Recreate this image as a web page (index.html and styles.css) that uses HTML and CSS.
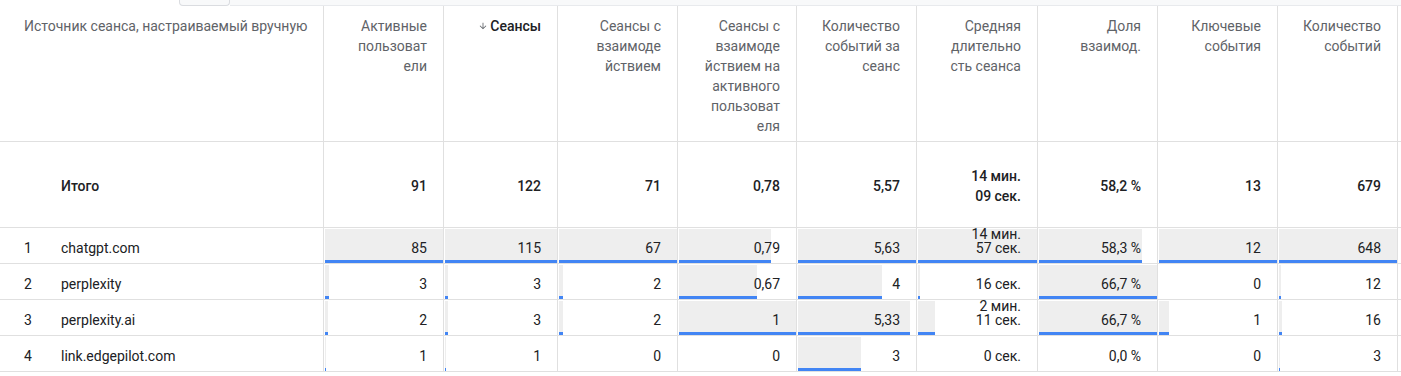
FILE: index.html
```html
<!DOCTYPE html>
<html lang="ru">
<head>
<meta charset="utf-8">
<title>Источник сеанса</title>
<link rel="stylesheet" href="styles.css">
</head>
<body>
<div class="topstrip"><div class="gap"></div><div class="tab"></div><div class="rail"></div></div>
<div class="table">
  <div class="row head">
    <div class="cell dim"><span class="label">Источник сеанса, настраиваемый вручную</span></div>
    <div class="cell"><span class="label">Активные пользоват<wbr>ели</span></div>
    <div class="cell sorted"><span class="label"><svg class="arrow" viewBox="0 0 24 24" width="10" height="10"><path d="M20 12l-1.41-1.41L13 16.17V4h-2v12.17l-5.58-5.59L4 12l8 8 8-8z"/></svg>Сеансы</span></div>
    <div class="cell"><span class="label">Сеансы с взаимоде<wbr>йствием</span></div>
    <div class="cell"><span class="label">Сеансы с взаимоде<wbr>йствием на активного пользоват<wbr>еля</span></div>
    <div class="cell"><span class="label">Количество событий за сеанс</span></div>
    <div class="cell"><span class="label">Средняя длительно<wbr>сть сеанса</span></div>
    <div class="cell"><span class="label">Доля взаимод.</span></div>
    <div class="cell"><span class="label">Ключевые события</span></div>
    <div class="cell"><span class="label">Количество событий</span></div>
  </div>

  <div class="row total">
    <div class="cell dim"><span class="idx"></span><span class="name">Итого</span></div>
    <div class="cell"><span class="val">91</span></div>
    <div class="cell"><span class="val">122</span></div>
    <div class="cell"><span class="val">71</span></div>
    <div class="cell"><span class="val">0,78</span></div>
    <div class="cell"><span class="val">5,57</span></div>
    <div class="cell"><span class="val">14 мин. 09 сек.</span></div>
    <div class="cell"><span class="val">58,2 %</span></div>
    <div class="cell"><span class="val">13</span></div>
    <div class="cell"><span class="val">679</span></div>
  </div>

  <div class="row data">
    <div class="cell dim"><span class="idx">1</span><span class="name">chatgpt.com</span></div>
    <div class="cell"><div class="track"><div class="bar" style="width:100%"></div></div><span class="val">85</span></div>
    <div class="cell"><div class="track"><div class="bar" style="width:100%"></div></div><span class="val">115</span></div>
    <div class="cell"><div class="track"><div class="bar" style="width:100%"></div></div><span class="val">67</span></div>
    <div class="cell"><div class="track"><div class="bar" style="width:79%"></div></div><span class="val">0,79</span></div>
    <div class="cell"><div class="track"><div class="bar" style="width:100%"></div></div><span class="val">5,63</span></div>
    <div class="cell"><div class="track"><div class="bar" style="width:100%"></div></div><span class="val">14 мин. 57 сек.</span></div>
    <div class="cell"><div class="track"><div class="bar" style="width:87.41%"></div></div><span class="val">58,3 %</span></div>
    <div class="cell"><div class="track"><div class="bar" style="width:100%"></div></div><span class="val">12</span></div>
    <div class="cell"><div class="track"><div class="bar" style="width:100%"></div></div><span class="val">648</span></div>
  </div>

  <div class="row data">
    <div class="cell dim"><span class="idx">2</span><span class="name">perplexity</span></div>
    <div class="cell"><div class="track"><div class="bar" style="width:3.53%"></div></div><span class="val">3</span></div>
    <div class="cell"><div class="track"><div class="bar" style="width:2.61%"></div></div><span class="val">3</span></div>
    <div class="cell"><div class="track"><div class="bar" style="width:2.99%"></div></div><span class="val">2</span></div>
    <div class="cell"><div class="track"><div class="bar" style="width:67%"></div></div><span class="val">0,67</span></div>
    <div class="cell"><div class="track"><div class="bar" style="width:71.05%"></div></div><span class="val">4</span></div>
    <div class="cell"><div class="track"><div class="bar" style="width:1.78%"></div></div><span class="val">16 сек.</span></div>
    <div class="cell"><div class="track"><div class="bar" style="width:100%"></div></div><span class="val">66,7 %</span></div>
    <div class="cell"><span class="val">0</span></div>
    <div class="cell"><div class="track"><div class="bar" style="width:1.85%"></div></div><span class="val">12</span></div>
  </div>

  <div class="row data">
    <div class="cell dim"><span class="idx">3</span><span class="name">perplexity.ai</span></div>
    <div class="cell"><div class="track"><div class="bar" style="width:2.35%"></div></div><span class="val">2</span></div>
    <div class="cell"><div class="track"><div class="bar" style="width:2.61%"></div></div><span class="val">3</span></div>
    <div class="cell"><div class="track"><div class="bar" style="width:2.99%"></div></div><span class="val">2</span></div>
    <div class="cell"><div class="track"><div class="bar" style="width:100%"></div></div><span class="val">1</span></div>
    <div class="cell"><div class="track"><div class="bar" style="width:94.67%"></div></div><span class="val">5,33</span></div>
    <div class="cell"><div class="track"><div class="bar" style="width:14.6%"></div></div><span class="val">2 мин. 11 сек.</span></div>
    <div class="cell"><div class="track"><div class="bar" style="width:100%"></div></div><span class="val">66,7 %</span></div>
    <div class="cell"><div class="track"><div class="bar" style="width:8.33%"></div></div><span class="val">1</span></div>
    <div class="cell"><div class="track"><div class="bar" style="width:2.47%"></div></div><span class="val">16</span></div>
  </div>

  <div class="row data">
    <div class="cell dim"><span class="idx">4</span><span class="name">link.edgepilot.com</span></div>
    <div class="cell"><div class="track"><div class="bar" style="width:1.18%"></div></div><span class="val">1</span></div>
    <div class="cell"><div class="track"><div class="bar" style="width:0.87%"></div></div><span class="val">1</span></div>
    <div class="cell"><span class="val">0</span></div>
    <div class="cell"><span class="val">0</span></div>
    <div class="cell"><div class="track"><div class="bar" style="width:53.29%"></div></div><span class="val">3</span></div>
    <div class="cell"><span class="val">0 сек.</span></div>
    <div class="cell"><span class="val">0,0 %</span></div>
    <div class="cell"><span class="val">0</span></div>
    <div class="cell"><div class="track"><div class="bar" style="width:0.46%"></div></div><span class="val">3</span></div>
  </div>
</div>
</body>
</html>
```

FILE: styles.css
```css
* { box-sizing: border-box; }

body {
  margin: 0;
  background: #fff;
  font-family: Roboto, "Noto Sans", "Liberation Sans", Arial, sans-serif;
  font-size: 14px;
  color: #202124;
}

.topstrip {
  display: flex;
  height: 6px;
}
.topstrip .gap { width: 179px; }
.topstrip .tab {
  width: 51px;
  background: #f8f9fa;
  border: 1px solid #dadce0;
  border-top: none;
  border-radius: 0 0 4px 4px;
}
.topstrip .rail {
  flex: 1;
  background: #f8f9fa;
  border-bottom: 1px solid #e8eaed;
}

.row {
  display: grid;
  grid-template-columns: 324px 120px 114px 120px 119px 120px 121px 120px 120px 120px;
  border-bottom: 1px solid #e0e0e0;
}

.cell {
  position: relative;
  border-right: 1px solid #e0e0e0;
}

/* header */
.head .cell {
  height: 135px;
  padding: 10px 16px 0 0;
  line-height: 20px;
  color: #5f6368;
  text-align: right;
}
.head .cell.dim {
  padding-left: 24px;
  text-align: left;
}
.label {
  display: inline-block;
  max-width: 80px;
}
.dim .label {
  max-width: none;
  white-space: nowrap;
}
.sorted .label {
  color: #202124;
  font-weight: 500;
}
.arrow {
  fill: #5f6368;
  margin-right: 2px;
  vertical-align: 0;
}

/* totals */
.total .cell {
  height: 85px;
  display: flex;
  align-items: center;
  justify-content: flex-end;
  padding: 2px 16px 0 0;
  line-height: 20px;
  font-weight: 500;
}

/* data rows */
.data .cell {
  height: 35px;
  display: flex;
  align-items: flex-end;
  justify-content: flex-end;
  padding: 0 16px 8px 0;
  line-height: 14px;
}

.cell.dim {
  justify-content: flex-start;
  padding-left: 24px;
}
.idx { width: 37px; flex: none; }

.val {
  position: relative;
  max-width: 60px;
  text-align: right;
}

.track {
  position: absolute;
  left: 1px;
  right: 0;
  top: 1px;
  bottom: 0;
}
.bar {
  height: 100%;
  background: #eeeeee;
  border-bottom: 3px solid #4285f4;
}
```
